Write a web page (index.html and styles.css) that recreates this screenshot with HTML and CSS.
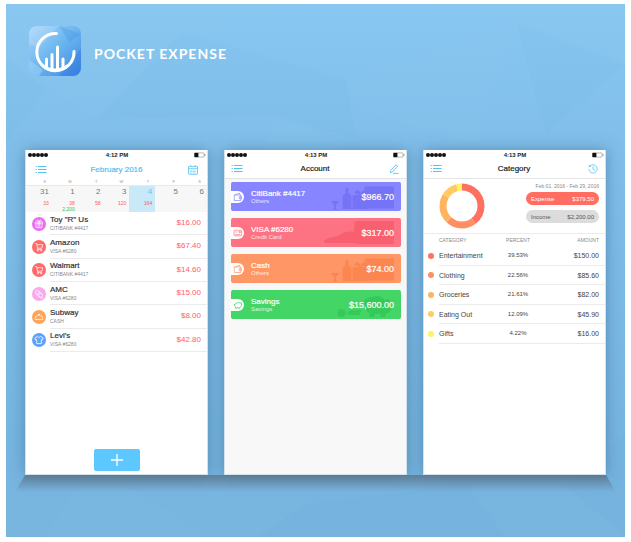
FILE: index.html
```html
<!DOCTYPE html>
<html lang="en">
<head>
<meta charset="utf-8">
<title>Pocket Expense</title>
<link rel="stylesheet" href="styles.css">
</head>
<body>
<svg class="sprite" aria-hidden="true">
  <symbol id="menu" viewBox="0 0 12 10"><g stroke="currentColor" stroke-width="1"><path d="M3 1.5h8.5M3 4.5h8.5M3 7.5h8.5"/><path d="M.6 1.5h1.2M.6 4.5h1.2M.6 7.5h1.2"/></g></symbol>
  <symbol id="battery" viewBox="0 0 12 6"><rect x=".5" y=".9" width="9.6" height="4.2" rx=".6" fill="#fff" stroke="#777" stroke-width=".5"/><rect x=".4" y=".9" width="4" height="4.2" fill="#111"/><path d="M11 2v2" stroke="#777" stroke-width=".7"/></symbol>
  <symbol id="gift" viewBox="0 0 14 14"><g fill="none" stroke="#fff" stroke-width=".7"><path d="M3.4 5h7.2v1.7H3.400zM4 6.700v4h6v-4M6.200 5v5.700M7.800 5v5.700M7 5C5 4.800 4.600 3 5.600 3S7 5 7 5s.4-2 1.400-2S9 4.800 7 5"/></g></symbol>
  <symbol id="cart" viewBox="0 0 14 14"><g fill="none" stroke="#fff" stroke-width=".7"><path d="M3 3.500h1.600l1 4.700h4.300l.8-3.500H5M5.600 8.200l-.5 1.200h4.900"/><circle cx="5.900" cy="10.500" r=".6"/><circle cx="9.200" cy="10.500" r=".6"/></g></symbol>
  <symbol id="film" viewBox="0 0 14 14"><g fill="none" stroke="#fff" stroke-width=".7"><circle cx="5.300" cy="5.300" r="1.900"/><circle cx="8.600" cy="8.300" r="1.900"/><path d="M4 7l4.500 3.800h2.500M6.900 4.300l2.800 2.300"/></g></symbol>
  <symbol id="dish" viewBox="0 0 14 14"><g fill="none" stroke="#fff" stroke-width=".8"><path d="M3.300 8.600C3.600 6.300 5 5 7 5s3.400 1.300 3.700 3.600M2.800 9.400h8.400M6.400 5c0-1.300 1.200-1.300 1.200 0"/></g></symbol>
  <symbol id="shirt" viewBox="0 0 14 14"><path d="M5.300 3.500L2.800 5l.9 2 1-.4v4h4.600v-4l1 .4.9-2-2.500-1.500c-.8 1.100-2.600 1.100-3.400 0z" fill="none" stroke="#fff" stroke-width=".8"/></symbol>
  <symbol id="wallet" viewBox="0 0 10 10"><g fill="none" stroke="currentColor" stroke-width=".7"><path d="M1.300 3h6.500v5.500H1.300zM1.600 2.900l4.900-1.700.5 1.700M8.600 4.700H6.300v2h2.300z"/></g></symbol>
  <symbol id="card" viewBox="0 0 10 10"><g fill="none" stroke="currentColor" stroke-width=".7"><rect x="1" y="2.200" width="7.600" height="5.600" rx=".5"/><path d="M2.200 4h2M2.200 6.400h5M6 3.500h1.400v1.100H6z"/></g></symbol>
  <symbol id="pig" viewBox="0 0 10 10"><path d="M1 4.600h.9C2.500 2.800 5.500 2 7.300 3l1-.5-.1 1.300.8 1.300-.9 1.100-1.300.9v1.200H5.700l-.3-.7H4l-.3.700H2.600V7C1.800 6.400 1.500 5.600 1 4.600z" fill="none" stroke="currentColor" stroke-width=".8"/></symbol>
  <symbol id="party" viewBox="0 0 62 29"><path d="M0 19h9l-3.600 4v3.500l2.100 1H1.500l2.100-1V23zM12 14l3-3V6h3v5l3 3v13h-9zM22 13h16v14H22zM24 11c2-5 5-3 6 1 1-4 5-5 6-1l-6 2z"/><rect x="34" y="4.500" width="31" height="22" rx="2"/></symbol>
  <symbol id="auto" viewBox="0 0 70 29"><path d="M0 23c6-5 12-3 18-7 4-3 12-3 16-1v10H2z"/><rect x="31" y="3" width="40" height="23" rx="2"/><path d="M31 9h40v4H31z"/></symbol>
  <symbol id="bank" viewBox="0 0 55 29"><circle cx="5" cy="23" r="4"/><path d="M11 22l4-2h10l-2 5H12zM28 10c5-4 15-5 20 0l5-1v5l3 3-3 5-4 2v3h-5v-3h-6v3h-5v-4c-4-2-5-6-5-9z"/><circle cx="41" cy="10" r="4"/></symbol>
</svg>

<main class="poster">
  <svg class="facets" viewBox="0 0 619 533" preserveAspectRatio="none" aria-hidden="true">
    <g fill="#fff" fill-opacity=".015"><path d="M0 0h300L175 28 90 115 0 55z"/><path d="M340 75L510 18 470 140 350 105z"/><path d="M510 18L619 60V0H430z"/><path d="M270 112l75 30-90 10zM70 480l40-8 90 61H40z"/></g>
    <g fill="#1763a8" fill-opacity=".012"><path d="M175 28L340 75l-70 37L90 115z"/><path d="M619 60L540 130 510 18zM340 75l10 60-80-23zM40 85L0 140V55z"/><path d="M619 430L560 482l59 51zM300 500l160-20 40 53H250z"/></g>
  </svg>

  <header class="brand">
    <svg class="logo" viewBox="0 0 52 50" aria-hidden="true">
      <defs><linearGradient id="lg" x1="0" y1="0" x2="1" y2="1"><stop offset="0" stop-color="#a9d6fb"/><stop offset=".5" stop-color="#69b5ef"/><stop offset="1" stop-color="#3c85e4"/></linearGradient><clipPath id="lc"><rect width="52" height="50" rx="8"/></clipPath></defs>
      <g clip-path="url(#lc)"><rect width="52" height="50" fill="url(#lg)"/><path d="M0 0h30L10 22 0 18z" fill="#fff" fill-opacity=".14"/><path d="M30 0l22 8-12 8z" fill="#2b80dc" fill-opacity=".2"/><path d="M52 22L38 40l-8 10h22z" fill="#2166dc" fill-opacity=".25"/><path d="M0 34l14 10-4 6H0z" fill="#b9defb" fill-opacity=".4"/></g>
      <path d="M27.500 7.600A18.600 18.600 0 1 0 45 25.500" fill="none" stroke="#fff" stroke-width="3" stroke-linecap="round"/>
      <path d="M17.500 33v8M23 28.500v15M28.500 21v23M34 33v9" stroke="#fff" stroke-width="3" stroke-linecap="round"/>
      <path d="M14 38q12 9 24 0l-4 5q-8 4-15 0z" fill="#fff"/>
    </svg>
    <h1>POCKET EXPENSE</h1>
  </header>

  <div class="screens">
    <section class="screen">
      <div class="status"><span class="signal"><i></i><i></i><i></i><i></i><i></i></span><span class="time">4:12 PM</span><svg class="battery"><use href="#battery"/></svg></div>
      <div class="nav nav-month"><button class="icon" aria-label="Menu"><svg class="menu"><use href="#menu"/></svg></button><h2>February 2016</h2>
        <button class="icon" aria-label="Calendar"><svg class="tool" viewBox="0 0 10 10"><g fill="none" stroke="currentColor" stroke-width=".8"><rect x=".5" y="1.300" width="9" height="8" rx=".6"/><path d="M.5 3.300h9M2.800.3v1.500M7.200.3v1.500"/><path d="M1.800 5h6.500M1.800 6.500h6.500M1.800 8h6.500" stroke-dasharray="1 .5" stroke-width=".7"/></g></svg></button></div>
      <table class="calendar">
        <thead><tr><th>S</th><th>M</th><th>T</th><th>W</th><th>T</th><th>F</th><th>S</th></tr></thead>
        <tbody><tr>
          <td><b>31</b><span class="out">33</span></td>
          <td><b>1</b><span class="out">38</span><span class="in">2,200</span></td>
          <td><b>2</b><span class="out">58</span></td>
          <td><b>3</b><span class="out">120</span></td>
          <td class="today"><b>4</b><span class="out">164</span></td>
          <td><b>5</b></td>
          <td><b>6</b></td>
        </tr></tbody>
      </table>
      <ul class="expenses">
        <li><svg class="badge violet"><use href="#gift"/></svg><div class="entry"><div><h3>Toy "R" Us</h3><p>CITIBANK #4417</p></div><span>$16.00</span></div></li>
        <li><svg class="badge red"><use href="#cart"/></svg><div class="entry"><div><h3>Amazon</h3><p>VISA #6280</p></div><span>$67.40</span></div></li>
        <li><svg class="badge red"><use href="#cart"/></svg><div class="entry"><div><h3>Walmart</h3><p>CITIBANK #4417</p></div><span>$14.60</span></div></li>
        <li><svg class="badge pink"><use href="#film"/></svg><div class="entry"><div><h3>AMC</h3><p>VISA #6280</p></div><span>$15.00</span></div></li>
        <li><svg class="badge orange"><use href="#dish"/></svg><div class="entry"><div><h3>Subway</h3><p>CASH</p></div><span>$8.00</span></div></li>
        <li><svg class="badge blue"><use href="#shirt"/></svg><div class="entry"><div><h3>Levi's</h3><p>VISA #6280</p></div><span>$42.80</span></div></li>
      </ul>
      <button class="add" aria-label="Add expense"><svg viewBox="0 0 12 12"><path d="M6 0v12M0 6h12" stroke="#fff" stroke-width="1.300"/></svg></button>
    </section>

    <section class="screen accounts-screen">
      <div class="status"><span class="signal"><i></i><i></i><i></i><i></i><i></i></span><span class="time">4:13 PM</span><svg class="battery"><use href="#battery"/></svg></div>
      <div class="nav ruled"><button class="icon" aria-label="Menu"><svg class="menu"><use href="#menu"/></svg></button><h2>Account</h2>
        <button class="icon" aria-label="Edit"><svg class="tool" viewBox="0 0 10 10"><path d="M1.500 6.500L7 .8l1.700 1.500L3.300 8l-2.100.6zM4 9.400h5.500" fill="none" stroke="currentColor" stroke-width=".9"/></svg></button></div>
      <ul class="accounts">
        <li class="account indigo"><svg class="art party"><use href="#party"/></svg><span class="tab"><svg><use href="#wallet"/></svg></span><div><h3>CitiBank #4417</h3><p>Others</p></div><strong>$966.70</strong></li>
        <li class="account rose"><svg class="art auto"><use href="#auto"/></svg><span class="tab"><svg><use href="#card"/></svg></span><div><h3>VISA #6280</h3><p>Credit Card</p></div><strong>$317.00</strong></li>
        <li class="account tangerine"><svg class="art party"><use href="#party"/></svg><span class="tab"><svg><use href="#wallet"/></svg></span><div><h3>Cash</h3><p>Others</p></div><strong>$74.00</strong></li>
        <li class="account green"><svg class="art bank"><use href="#bank"/></svg><span class="tab"><svg><use href="#pig"/></svg></span><div><h3>Savings</h3><p>Savings</p></div><strong>$15,600.00</strong></li>
      </ul>
    </section>

    <section class="screen">
      <div class="status"><span class="signal"><i></i><i></i><i></i><i></i><i></i></span><span class="time">4:13 PM</span><svg class="battery"><use href="#battery"/></svg></div>
      <div class="nav ruled"><button class="icon" aria-label="Menu"><svg class="menu"><use href="#menu"/></svg></button><h2>Category</h2>
        <button class="icon" aria-label="History"><svg class="tool" viewBox="0 0 10 10"><path d="M1.700 2.300A4.200 4.200 0 1 1 .8 5M1.300.8v1.800h1.800M5 2.300V5.200L6.800 6.500" fill="none" stroke="currentColor" stroke-width=".8"/></svg></button></div>
      <div class="summary">
        <svg class="donut" viewBox="0 0 46 46" role="img" aria-label="Expenses by category">
          <g fill="none" stroke-width="7" transform="rotate(-90 23 23)">
            <circle cx="23" cy="23" r="19" pathLength="100" stroke="#ff7060" stroke-dasharray="39.530 100"/>
            <circle cx="23" cy="23" r="19" pathLength="100" stroke="#ff8e63" stroke-dasharray="22.560 100" stroke-dashoffset="-39.530"/>
            <circle cx="23" cy="23" r="19" pathLength="100" stroke="#ffb45f" stroke-dasharray="21.610 100" stroke-dashoffset="-62.090"/>
            <circle cx="23" cy="23" r="19" pathLength="100" stroke="#ffcb62" stroke-dasharray="12.090 100" stroke-dashoffset="-83.700"/>
            <circle cx="23" cy="23" r="19" pathLength="100" stroke="#fff263" stroke-dasharray="4.220 100" stroke-dashoffset="-95.790"/>
          </g>
        </svg>
        <div class="totals"><p>Feb 01, 2016 - Feb 29, 2016</p>
          <div class="pill spent"><span>Expense</span><span>$379.50</span></div>
          <div class="pill earned"><span>Income</span><span>$2,200.00</span></div></div>
      </div>
      <table class="categories">
        <thead><tr><th class="key"></th><th class="name">CATEGORY</th><th class="percent">PERCENT</th><th class="amount">AMOUNT</th></tr></thead>
        <tbody>
          <tr><td class="key"><i class="dot c1"></i></td><td>Entertainment</td><td class="percent">39.53%</td><td class="amount">$150.00</td></tr>
          <tr><td class="key"><i class="dot c2"></i></td><td>Clothing</td><td class="percent">22.56%</td><td class="amount">$85.60</td></tr>
          <tr><td class="key"><i class="dot c3"></i></td><td>Groceries</td><td class="percent">21.61%</td><td class="amount">$82.00</td></tr>
          <tr><td class="key"><i class="dot c4"></i></td><td>Eating Out</td><td class="percent">12.09%</td><td class="amount">$45.90</td></tr>
          <tr><td class="key"><i class="dot c5"></i></td><td>Gifts</td><td class="percent">4.22%</td><td class="amount">$16.00</td></tr>
        </tbody>
      </table>
    </section>
  </div>
</main>
</body>
</html>
```
FILE: styles.css
```css
* { box-sizing: border-box; }
body {
  margin: 0;
  padding: 4px 6px 5px;
  min-height: 100vh;
  display: flex;
  background: #fff;
  color: #444;
  font-family: "Liberation Sans", Arial, sans-serif;
}
h1, h2, h3, p, ul { margin: 0; padding: 0; font-weight: 400; }
ul { list-style: none; }
button { border: 0; padding: 0; background: none; font: inherit; }
svg { display: block; }
table { border-collapse: collapse; width: 100%; table-layout: fixed; }
th, td { padding: 0; font-weight: 400; }
.sprite { position: absolute; width: 0; height: 0; }

.poster {
  position: relative;
  flex: 1;
  display: flex;
  flex-direction: column;
  padding: 22px 19px 62px;
  overflow: hidden;
  background: linear-gradient(#88c7f1, #80bee9 30%, #77b6e1 80%, #78b5df);
}
.facets { position: absolute; inset: 0; width: 100%; height: 100%; }
.brand { position: relative; display: flex; align-items: center; gap: 13px; padding-left: 4px; }
.logo { width: 52px; height: 50px; }
.brand h1 {
  padding-top: 6px;
  color: #fff;
  font: 700 14px/18px Lato, sans-serif;
  letter-spacing: 1px;
}

.screens {
  position: relative;
  flex: 1;
  display: grid;
  grid-template-columns: repeat(3, 1fr);
  gap: 16px;
  margin-top: 74px;
}
.screens::after {
  content: "";
  position: absolute;
  top: 100%;
  left: -10px;
  right: -10px;
  height: 17px;
  background: linear-gradient(rgba(90, 110, 130, .75), rgba(100, 130, 155, 0));
  clip-path: polygon(10px 0, calc(100% - 10px) 0, 100% 100%, 0 100%);
}
.screen {
  display: flex;
  flex-direction: column;
  border: solid #d3e3ec;
  border-width: 0 1px 1px;
  background: #fff;
  box-shadow: 0 0 14px rgba(50, 95, 135, .5);
}
.accounts-screen { background: #f8f8f8; }

.status {
  display: grid;
  grid-template-columns: 1fr auto 1fr;
  align-items: center;
  height: 10px;
  padding: 0 1px 0 2px;
  background: #fff;
  color: #222;
}
.signal { display: flex; }
.signal i { width: 4px; height: 4px; border-radius: 50%; background: #111; }
.time { font-size: 6px; line-height: 8px; font-weight: 700; }
.battery { width: 12px; height: 6px; justify-self: end; }
.nav {
  display: grid;
  grid-template-columns: 1fr auto 1fr;
  align-items: center;
  height: 19px;
  padding: 0 9px;
  background: #fff;
  color: #222;
}
.nav.ruled { border-bottom: 1px solid #e4e4e4; padding: 0 7px 0 6px; }
.nav h2 { font-size: 8px; line-height: 10px; -webkit-text-stroke: .2px; }
.nav-month h2 { color: #54bfee; }
.icon { color: #55c3f2; justify-self: start; }
.icon:last-child { justify-self: end; }
.menu { width: 12px; height: 10px; }
.tool { width: 10px; height: 10px; }

.calendar { background: #f7f7f7; text-align: right; }
.calendar thead { background: #fff; }
.calendar th { height: 6px; padding-right: 6px; color: #999; font-size: 4px; line-height: 5px; text-align: right; }
.calendar td { height: 27px; padding: 1px 3px 0 0; border-top: 1px solid #e9e9e9; vertical-align: top; }
.calendar b { display: block; margin-bottom: 3px; color: #777; font-weight: 400; font-size: 8px; line-height: 10px; }
.calendar span { display: block; font-size: 5px; line-height: 6px; }
.calendar .today { background: #c9e8f8; }
.today b { color: #6bc6f0; }
.out { color: #ff5b6c; }
.in { color: #2fc455; }

.expenses { display: grid; grid-auto-rows: 1fr; height: 140px; }
.expenses li { display: flex; align-items: center; gap: 4px; padding-left: 6px; }
.badge { width: 14px; height: 14px; border-radius: 50%; flex: none; }
.violet { background: #e96df3; }
.red { background: #ff6a6a; }
.pink { background: #fba7ee; }
.orange { background: #ffa55a; }
.blue { background: #5ea2fa; }
.entry {
  flex: 1;
  align-self: stretch;
  display: flex;
  align-items: center;
  justify-content: space-between;
  padding-right: 6px;
  border-bottom: 1px solid #ebebeb;
}
.entry h3 { color: #333; font-size: 8px; line-height: 10px; -webkit-text-stroke: .2px; }
.entry p { color: #888; font-size: 5px; line-height: 7px; }
.entry span { color: #ff5b6c; font-size: 8px; line-height: 10px; }
.add {
  display: grid;
  place-items: center;
  width: 46px;
  height: 22px;
  margin: auto auto 3px;
  border-radius: 2px;
  background: #5dc8ff;
}
.add svg { width: 12px; height: 12px; }

.accounts { display: grid; gap: 7px; padding: 3px 5px 0 6px; }
.account {
  position: relative;
  display: flex;
  align-items: center;
  height: 29px;
  padding-right: 7px;
  border-radius: 2px;
  overflow: hidden;
  color: #fff;
}
.account div { position: relative; margin-left: 7px; flex: 1; }
.account h3 { font-size: 8px; line-height: 9px; -webkit-text-stroke: .2px; }
.account p { font-size: 6px; line-height: 7px; opacity: .8; }
.account strong { position: relative; font-size: 9px; line-height: 12px; font-weight: 400; -webkit-text-stroke: .2px; }
.tab { display: grid; place-items: center; width: 13px; height: 12px; border-radius: 0 6px 6px 0; background: #fff; }
.tab svg { width: 10px; height: 10px; }
.art { position: absolute; top: 0; right: 7px; height: 29px; }
.art.party { width: 65px; }
.art.auto { width: 71px; }
.art.bank { width: 60px; }
.indigo { background: #8785ff; }
.indigo .art { fill: #7674f6; }
.rose { background: #fd7383; }
.rose .art { fill: #f9606f; }
.tangerine { background: #fe9765; }
.tangerine .art { fill: #fb8650; }
.green { background: #43d566; }
.green .art { fill: #35c95a; }
.indigo .tab { color: #8785ff; }
.rose .tab { color: #fd7383; }
.tangerine .tab { color: #fe9765; }
.green .tab { color: #43d566; }

.summary { display: flex; justify-content: space-between; height: 54px; padding: 3px 6px 0 15px; }
.donut { width: 46px; height: 46px; margin-top: 1px; }
.totals { display: grid; align-content: start; width: 73px; }
.totals p { height: 10px; color: #888; font-size: 5px; line-height: 8px; text-align: right; white-space: nowrap; }
.pill {
  display: flex;
  align-items: center;
  justify-content: space-between;
  height: 13px;
  margin-bottom: 5px;
  padding: 0 5px;
  border-radius: 7px;
  font-size: 6px;
  line-height: 8px;
}
.spent { background: #ff6e60; color: #fff; }
.earned { background: #dcdcdc; color: #555; }

.categories { border-top: 1px solid #ebebeb; color: #444; font-size: 7px; line-height: 9px; }
.categories th { height: 12px; color: #888; font-size: 5px; line-height: 6px; text-align: left; }
.categories td { height: 20px; border-bottom: 1px solid #ebebeb; }
.categories tr:nth-child(even) td { height: 19px; }
.categories .key { width: 15px; padding-left: 4px; border: 0; }
.categories .name { width: 63px; }
.categories .percent { width: 32px; text-align: center; }
.categories td.percent { font-size: 6px; }
.categories .amount { padding-right: 6px; text-align: right; }
.dot { display: block; width: 6px; height: 6px; border-radius: 50%; }
.c1 { background: #ff7060; }
.c2 { background: #ff8e63; }
.c3 { background: #ffb45f; }
.c4 { background: #ffcb62; }
.c5 { background: #fff263; }
```
